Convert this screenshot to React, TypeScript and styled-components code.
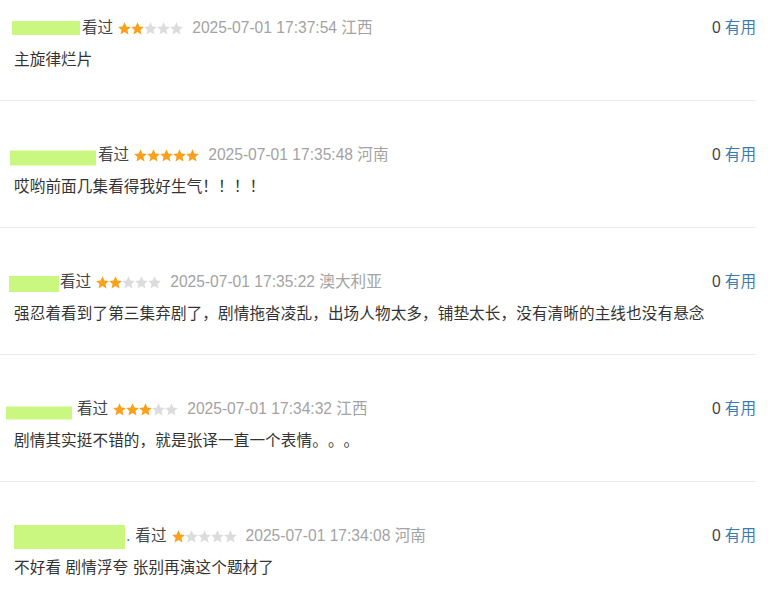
import React from 'react'
import styled, { createGlobalStyle } from 'styled-components'

const LookAndFeel = createGlobalStyle`
  html, body {
    margin: 0;
    padding: 0;
    background: #ffffff;
  }
  body {
    font-family: "Liberation Sans", "Noto Sans CJK SC", sans-serif;
    font-size: 15.6px;
    color: #333;
    overflow: hidden;
    text-spacing-trim: space-all;
    font-feature-settings: "chws" 0, "halt" 0, "palt" 0;
  }
`

const List = styled.div`
  width: 756px;
`

const Item = styled.div`
  padding: 44px 0 30px 0;
  border-bottom: 1px solid #ebebeb;

  &:first-child {
    padding-top: 18px;
  }
`

const Header = styled.div`
  display: flex;
  align-items: center;
  height: 20px;
  line-height: 20px;
  white-space: nowrap;
`

const Redact = styled.span<{ $left: number; $width: number; $height: number; $shift: number }>`
  display: inline-block;
  flex: none;
  margin-left: ${p => p.$left}px;
  width: ${p => p.$width}px;
  height: ${p => p.$height}px;
  background: #c9f77f;
  transform: translateY(${p => p.$shift}px);
`

const Dot = styled.span`
  color: #37a;
  margin-left: 1px;
  margin-right: 5px;
`

const Watched = styled.span<{ $gap: number }>`
  margin-left: ${p => p.$gap}px;
  color: #444;
`

const Stars = styled.span`
  display: inline-flex;
  margin-left: 5px;
`

const Time = styled.span`
  margin-left: 9px;
  color: #a3a3a3;
`

const Useful = styled.span`
  margin-left: auto;
  color: #444;
`

const UsefulLink = styled.span`
  color: #3b7bb1;
  margin-left: 4px;
`

const Content = styled.div`
  margin-top: 12px;
  padding-left: 14px;
  line-height: 20px;
  color: #333;
  white-space: nowrap;
  letter-spacing: 0.1px;
`

const Star = ({ on }: { on: boolean }) => (
  <svg width="13" height="13" viewBox="1 1 22 22">
    <path
      d="M12 1.5l3.2 7.1 7.6.7-5.8 5.1 1.8 7.6L12 18l-6.8 4 1.8-7.6-5.8-5.1 7.6-.7z"
      fill={on ? '#f9a11b' : '#dcdcdc'}
    />
  </svg>
)

type Review = {
  left: number
  width: number
  height: number
  shift: number
  gap: number
  dot?: boolean
  rating: number
  time: string
  place: string
  text: string
}

const reviews: Review[] = [
  { left: 12, width: 68, height: 14, shift: 0, gap: 2, rating: 2, time: '2025-07-01 17:37:54', place: '江西', text: '主旋律烂片' },
  { left: 10, width: 86, height: 15, shift: 2.5, gap: 2, rating: 5, time: '2025-07-01 17:35:48', place: '河南', text: '哎哟前面几集看得我好生气！！！！' },
  { left: 9, width: 50, height: 16, shift: 2, gap: 1, rating: 2, time: '2025-07-01 17:35:22', place: '澳大利亚', text: '强忍着看到了第三集弃剧了，剧情拖沓凌乱，出场人物太多，铺垫太长，没有清晰的主线也没有悬念' },
  { left: 6, width: 66, height: 13, shift: 3.5, gap: 5, rating: 3, time: '2025-07-01 17:34:32', place: '江西', text: '剧情其实挺不错的，就是张译一直一个表情。。。' },
  { left: 14, width: 111, height: 24, shift: 1, gap: 0, dot: true, rating: 1, time: '2025-07-01 17:34:08', place: '河南', text: '不好看 剧情浮夸 张别再演这个题材了' },
]

const App = () => {
  return (
    <List>
      <LookAndFeel />
      {reviews.map((r, i) => (
        <Item key={i}>
          <Header>
            <Redact $left={r.left} $width={r.width} $height={r.height} $shift={r.shift} />
            {r.dot && <Dot>.</Dot>}
            <Watched $gap={r.gap}>看过</Watched>
            <Stars>
              {[0, 1, 2, 3, 4].map(n => (
                <Star key={n} on={n < r.rating} />
              ))}
            </Stars>
            <Time>{r.time} {r.place}</Time>
            <Useful>
              0<UsefulLink>有用</UsefulLink>
            </Useful>
          </Header>
          <Content>{r.text}</Content>
        </Item>
      ))}
    </List>
  )
}

export default App
